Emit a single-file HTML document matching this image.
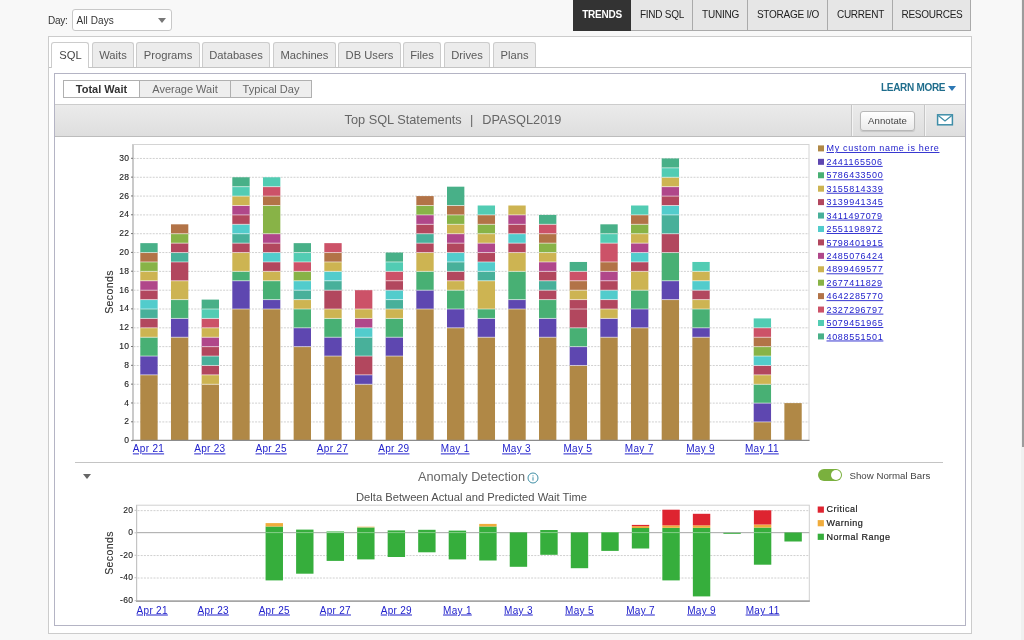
<!DOCTYPE html>
<html>
<head>
<meta charset="utf-8">
<title>Trends</title>
<style>
html,body{margin:0;padding:0;}
body{width:1024px;height:640px;overflow:hidden;background:#f8f8f8;font-family:"Liberation Sans",sans-serif;position:relative;color:#333;}
.abs{position:absolute;}
#wrap{position:absolute;left:0;top:0;width:1024px;height:640px;will-change:transform;}
#daylbl{left:48px;top:14px;font-size:10px;color:#333;line-height:13px;letter-spacing:-0.3px;}
#daysel{left:72px;top:9px;width:100px;height:22px;box-sizing:border-box;border:1px solid #c8c8c8;border-radius:3px;background:#fff;font-size:10px;line-height:21px;padding-left:3.5px;color:#333;letter-spacing:0.08px;}
#daysel i{position:absolute;right:5.2px;top:7.9px;width:0;height:0;border-left:4.5px solid transparent;border-right:4.5px solid transparent;border-top:5px solid #777;}
.nav{top:0;height:31px;box-sizing:border-box;background:#e6e6e6;border-right:1px solid #aaa;border-bottom:1px solid #aaa;font-size:10px;color:#222;text-align:center;line-height:30px;letter-spacing:-0.25px;white-space:nowrap;padding-left:1px;}
.nav.on{background:#333;color:#fff;font-weight:bold;border-color:#333;}
#outer{left:48px;top:36px;width:924px;height:598px;box-sizing:border-box;border:1px solid #ccc;background:#fff;}
#tabline{left:49px;top:67px;width:922px;height:1px;background:#c4c4c4;}
.tab{top:42px;height:25px;box-sizing:border-box;border:1px solid #ccc;border-bottom:none;border-radius:3px 3px 0 0;background:#ececec;font-size:11.2px;color:#5a5a5a;text-align:center;line-height:25px;white-space:nowrap;}
.tab.on{background:#fff;height:26px;color:#444;padding-left:1px;}
#inner{left:54px;top:73px;width:912px;height:553px;box-sizing:border-box;border:1px solid #b4b4c4;background:#fff;}
.sub{top:80px;height:18px;box-sizing:border-box;border:1px solid #b0b0b0;background:#eee;font-size:11px;color:#666;text-align:center;line-height:16px;white-space:nowrap;}
.sub.on{background:#fff;color:#333;font-weight:bold;}
#learn{left:881px;top:81.4px;font-size:10px;font-weight:bold;color:#1f6d8c;line-height:13px;white-space:nowrap;letter-spacing:-0.3px;}
#learntri{left:948.4px;top:85.8px;width:0;height:0;border-left:4.1px solid transparent;border-right:4.1px solid transparent;border-top:5px solid #2d78b4;}
#tbar{left:55px;top:104px;width:910px;height:33px;box-sizing:border-box;border-top:1px solid #ccc;border-bottom:1px solid #bcbcbc;background:linear-gradient(#ebebeb,#dedede);}
#ttl{left:55px;top:111.5px;width:796px;text-align:center;font-size:12.75px;color:#666;line-height:16px;white-space:pre;}
.vsep{top:105px;width:1px;height:31px;background:#c6c6c6;border-right:1px solid #f4f4f4;}
#ann{left:860px;top:111px;width:55px;height:20px;box-sizing:border-box;border:1px solid #b8b8b8;border-radius:3px;background:linear-gradient(#fff,#eaeaea);font-size:9.6px;color:#444;text-align:center;line-height:18.7px;letter-spacing:0.05px;box-shadow:0 1px 1px rgba(0,0,0,0.12);}
#hr2{left:75px;top:462px;width:868px;height:1px;background:#c4c4c4;}
#coll{left:82.7px;top:474.3px;width:0;height:0;border-left:4.5px solid transparent;border-right:4.5px solid transparent;border-top:5px solid #666;}
#anom{left:418px;top:469px;width:190px;font-size:12.75px;color:#666;line-height:16px;white-space:nowrap;}
#delta{left:300px;top:490px;width:343px;text-align:center;font-size:11.2px;color:#505050;line-height:14px;white-space:nowrap;}
#tog{left:818px;top:469px;width:24px;height:12px;border-radius:6px;background:#7ab03e;}
#tog i{position:absolute;right:1px;top:1px;width:10px;height:10px;border-radius:5px;background:#fff;}
#snb{left:849.5px;top:469px;font-size:9.7px;color:#444;line-height:13px;white-space:nowrap;}
#scrtrack{left:1021px;top:0;width:3px;height:640px;background:#f0f0f0;}
#scrthumb{left:1022.4px;top:0;width:1.6px;height:447px;background:#9c9c9c;}
svg text{font-family:"Liberation Sans",sans-serif;}
.yt{font-size:8.5px;fill:#222;letter-spacing:0.4px;stroke:#222;stroke-width:0.12px;}
.xl{font-size:10px;fill:#2222cc;letter-spacing:0.3px;text-decoration:underline;}
.al{font-size:10.5px;fill:#333;letter-spacing:0.4px;stroke:#333;stroke-width:0.12px;}
.lg{font-size:9px;fill:#2222cc;text-decoration:underline;letter-spacing:0.68px;}
.lg2{font-size:9px;fill:#222;letter-spacing:0.5px;stroke:#222;stroke-width:0.2px;}
</style>
</head>
<body>
<div id="wrap">
<div class="abs" id="daylbl">Day:</div>
<div class="abs" id="daysel">All Days<i></i></div>

<div class="abs nav on" style="left:573px;width:58px;">TRENDS</div>
<div class="abs nav" style="left:631px;width:62px;">FIND SQL</div>
<div class="abs nav" style="left:693px;width:55px;">TUNING</div>
<div class="abs nav" style="left:748px;width:80px;">STORAGE I/O</div>
<div class="abs nav" style="left:828px;width:65px;">CURRENT</div>
<div class="abs nav" style="left:893px;width:78px;">RESOURCES</div>

<div class="abs" id="outer"></div>
<div class="abs" id="tabline"></div>
<div class="abs tab on" style="left:51px;width:38px;">SQL</div>
<div class="abs tab" style="left:92px;width:42px;">Waits</div>
<div class="abs tab" style="left:136px;width:64px;">Programs</div>
<div class="abs tab" style="left:202px;width:68px;">Databases</div>
<div class="abs tab" style="left:273px;width:63px;">Machines</div>
<div class="abs tab" style="left:338px;width:63px;">DB Users</div>
<div class="abs tab" style="left:403px;width:38px;">Files</div>
<div class="abs tab" style="left:444px;width:46px;">Drives</div>
<div class="abs tab" style="left:493px;width:43px;">Plans</div>

<div class="abs" id="inner"></div>
<div class="abs sub on" style="left:63px;width:77px;">Total Wait</div>
<div class="abs sub" style="left:139px;width:92px;">Average Wait</div>
<div class="abs sub" style="left:230px;width:82px;">Typical Day</div>
<div class="abs" id="learn">LEARN MORE</div>
<div class="abs" id="learntri"></div>

<div class="abs" id="tbar"></div>
<div class="abs" id="ttl">Top SQL Statements<span style="margin:0 8.9px 0 8.4px">|</span>DPASQL2019</div>
<div class="abs vsep" style="left:851px;"></div>
<div class="abs vsep" style="left:924px;"></div>
<div class="abs" id="ann">Annotate</div>
<svg class="abs" style="left:936px;top:113px;" width="18" height="14" viewBox="0 0 18 14"><rect x="1.6" y="1.8" width="14.8" height="10" fill="#fff" stroke="#3f8ea8" stroke-width="1.5"/><path d="M2.2 2.6 L9 8 L15.8 2.6" fill="none" stroke="#3f8ea8" stroke-width="1.3"/></svg>

<div class="abs" id="hr2"></div>
<div class="abs" id="coll"></div>
<div class="abs" id="anom">Anomaly Detection</div>
<svg class="abs" style="left:527.2px;top:471.5px;" width="12" height="12" viewBox="0 0 12 12"><circle cx="6" cy="6" r="5" fill="#fff" stroke="#3f8fa6" stroke-width="1"/><rect x="5.5" y="5.2" width="1" height="3.4" fill="#3f8fa6"/><rect x="5.5" y="3.3" width="1" height="1.1" fill="#3f8fa6"/></svg>
<div class="abs" id="delta">Delta Between Actual and Predicted Wait Time</div>
<div class="abs" id="tog"><i></i></div>
<div class="abs" id="snb">Show Normal Bars</div>

<svg class="abs" style="left:0;top:0;" width="1024" height="640" viewBox="0 0 1024 640">
<rect x="132.5" y="144.5" width="676.5" height="295.8" fill="#fff" stroke="#d4d4d4" stroke-width="1"/>
<line x1="133.5" y1="421.93" x2="809.0" y2="421.93" stroke="#d0d0d0" stroke-width="1" stroke-dasharray="2,1.2"/>
<line x1="133.5" y1="403.11" x2="809.0" y2="403.11" stroke="#d0d0d0" stroke-width="1" stroke-dasharray="2,1.2"/>
<line x1="133.5" y1="384.29" x2="809.0" y2="384.29" stroke="#d0d0d0" stroke-width="1" stroke-dasharray="2,1.2"/>
<line x1="133.5" y1="365.47" x2="809.0" y2="365.47" stroke="#d0d0d0" stroke-width="1" stroke-dasharray="2,1.2"/>
<line x1="133.5" y1="346.65" x2="809.0" y2="346.65" stroke="#d0d0d0" stroke-width="1" stroke-dasharray="2,1.2"/>
<line x1="133.5" y1="327.83" x2="809.0" y2="327.83" stroke="#d0d0d0" stroke-width="1" stroke-dasharray="2,1.2"/>
<line x1="133.5" y1="309.01" x2="809.0" y2="309.01" stroke="#d0d0d0" stroke-width="1" stroke-dasharray="2,1.2"/>
<line x1="133.5" y1="290.19" x2="809.0" y2="290.19" stroke="#d0d0d0" stroke-width="1" stroke-dasharray="2,1.2"/>
<line x1="133.5" y1="271.37" x2="809.0" y2="271.37" stroke="#d0d0d0" stroke-width="1" stroke-dasharray="2,1.2"/>
<line x1="133.5" y1="252.55" x2="809.0" y2="252.55" stroke="#d0d0d0" stroke-width="1" stroke-dasharray="2,1.2"/>
<line x1="133.5" y1="233.73" x2="809.0" y2="233.73" stroke="#d0d0d0" stroke-width="1" stroke-dasharray="2,1.2"/>
<line x1="133.5" y1="214.91" x2="809.0" y2="214.91" stroke="#d0d0d0" stroke-width="1" stroke-dasharray="2,1.2"/>
<line x1="133.5" y1="196.09" x2="809.0" y2="196.09" stroke="#d0d0d0" stroke-width="1" stroke-dasharray="2,1.2"/>
<line x1="133.5" y1="177.27" x2="809.0" y2="177.27" stroke="#d0d0d0" stroke-width="1" stroke-dasharray="2,1.2"/>
<line x1="133.5" y1="158.45" x2="809.0" y2="158.45" stroke="#d0d0d0" stroke-width="1" stroke-dasharray="2,1.2"/>
<rect x="140.30" y="374.88" width="17.35" height="65.87" fill="#B08846"/>
<rect x="140.30" y="356.06" width="17.35" height="18.82" fill="#5E47B0"/>
<rect x="140.30" y="337.24" width="17.35" height="18.82" fill="#48B074"/>
<rect x="140.30" y="327.83" width="17.35" height="9.41" fill="#CDB452"/>
<rect x="140.30" y="318.42" width="17.35" height="9.41" fill="#B2475E"/>
<rect x="140.30" y="309.01" width="17.35" height="9.41" fill="#48B09A"/>
<rect x="140.30" y="299.60" width="17.35" height="9.41" fill="#52CCCC"/>
<rect x="140.30" y="290.19" width="17.35" height="9.41" fill="#B2475E"/>
<rect x="140.30" y="280.78" width="17.35" height="9.41" fill="#B0478A"/>
<rect x="140.30" y="271.37" width="17.35" height="9.41" fill="#CDB452"/>
<rect x="140.30" y="261.96" width="17.35" height="9.41" fill="#88B347"/>
<rect x="140.30" y="252.55" width="17.35" height="9.41" fill="#B27347"/>
<rect x="140.30" y="243.14" width="17.35" height="9.41" fill="#48B088"/>
<rect x="140.30" y="374.38" width="17.35" height="1" fill="#fff" fill-opacity="0.55"/>
<rect x="140.30" y="355.56" width="17.35" height="1" fill="#fff" fill-opacity="0.55"/>
<rect x="140.30" y="336.74" width="17.35" height="1" fill="#fff" fill-opacity="0.55"/>
<rect x="140.30" y="327.33" width="17.35" height="1" fill="#fff" fill-opacity="0.55"/>
<rect x="140.30" y="317.92" width="17.35" height="1" fill="#fff" fill-opacity="0.55"/>
<rect x="140.30" y="308.51" width="17.35" height="1" fill="#fff" fill-opacity="0.55"/>
<rect x="140.30" y="299.10" width="17.35" height="1" fill="#fff" fill-opacity="0.55"/>
<rect x="140.30" y="289.69" width="17.35" height="1" fill="#fff" fill-opacity="0.55"/>
<rect x="140.30" y="280.28" width="17.35" height="1" fill="#fff" fill-opacity="0.55"/>
<rect x="140.30" y="270.87" width="17.35" height="1" fill="#fff" fill-opacity="0.55"/>
<rect x="140.30" y="261.46" width="17.35" height="1" fill="#fff" fill-opacity="0.55"/>
<rect x="140.30" y="252.05" width="17.35" height="1" fill="#fff" fill-opacity="0.55"/>
<rect x="170.97" y="337.24" width="17.35" height="103.51" fill="#B08846"/>
<rect x="170.97" y="318.42" width="17.35" height="18.82" fill="#5E47B0"/>
<rect x="170.97" y="299.60" width="17.35" height="18.82" fill="#48B074"/>
<rect x="170.97" y="280.78" width="17.35" height="18.82" fill="#CDB452"/>
<rect x="170.97" y="261.96" width="17.35" height="18.82" fill="#B2475E"/>
<rect x="170.97" y="252.55" width="17.35" height="9.41" fill="#48B09A"/>
<rect x="170.97" y="243.14" width="17.35" height="9.41" fill="#B2475E"/>
<rect x="170.97" y="233.73" width="17.35" height="9.41" fill="#88B347"/>
<rect x="170.97" y="224.32" width="17.35" height="9.41" fill="#B27347"/>
<rect x="170.97" y="336.74" width="17.35" height="1" fill="#fff" fill-opacity="0.55"/>
<rect x="170.97" y="317.92" width="17.35" height="1" fill="#fff" fill-opacity="0.55"/>
<rect x="170.97" y="299.10" width="17.35" height="1" fill="#fff" fill-opacity="0.55"/>
<rect x="170.97" y="280.28" width="17.35" height="1" fill="#fff" fill-opacity="0.55"/>
<rect x="170.97" y="261.46" width="17.35" height="1" fill="#fff" fill-opacity="0.55"/>
<rect x="170.97" y="252.05" width="17.35" height="1" fill="#fff" fill-opacity="0.55"/>
<rect x="170.97" y="242.64" width="17.35" height="1" fill="#fff" fill-opacity="0.55"/>
<rect x="170.97" y="233.23" width="17.35" height="1" fill="#fff" fill-opacity="0.55"/>
<rect x="201.64" y="384.29" width="17.35" height="56.46" fill="#B08846"/>
<rect x="201.64" y="374.88" width="17.35" height="9.41" fill="#CDB452"/>
<rect x="201.64" y="365.47" width="17.35" height="9.41" fill="#B2475E"/>
<rect x="201.64" y="356.06" width="17.35" height="9.41" fill="#48B09A"/>
<rect x="201.64" y="346.65" width="17.35" height="9.41" fill="#B2475E"/>
<rect x="201.64" y="337.24" width="17.35" height="9.41" fill="#B0478A"/>
<rect x="201.64" y="327.83" width="17.35" height="9.41" fill="#CDB452"/>
<rect x="201.64" y="318.42" width="17.35" height="9.41" fill="#CC5268"/>
<rect x="201.64" y="309.01" width="17.35" height="9.41" fill="#52CCB3"/>
<rect x="201.64" y="299.60" width="17.35" height="9.41" fill="#48B088"/>
<rect x="201.64" y="383.79" width="17.35" height="1" fill="#fff" fill-opacity="0.55"/>
<rect x="201.64" y="374.38" width="17.35" height="1" fill="#fff" fill-opacity="0.55"/>
<rect x="201.64" y="364.97" width="17.35" height="1" fill="#fff" fill-opacity="0.55"/>
<rect x="201.64" y="355.56" width="17.35" height="1" fill="#fff" fill-opacity="0.55"/>
<rect x="201.64" y="346.15" width="17.35" height="1" fill="#fff" fill-opacity="0.55"/>
<rect x="201.64" y="336.74" width="17.35" height="1" fill="#fff" fill-opacity="0.55"/>
<rect x="201.64" y="327.33" width="17.35" height="1" fill="#fff" fill-opacity="0.55"/>
<rect x="201.64" y="317.92" width="17.35" height="1" fill="#fff" fill-opacity="0.55"/>
<rect x="201.64" y="308.51" width="17.35" height="1" fill="#fff" fill-opacity="0.55"/>
<rect x="232.31" y="309.01" width="17.35" height="131.74" fill="#B08846"/>
<rect x="232.31" y="280.78" width="17.35" height="28.23" fill="#5E47B0"/>
<rect x="232.31" y="271.37" width="17.35" height="9.41" fill="#48B074"/>
<rect x="232.31" y="252.55" width="17.35" height="18.82" fill="#CDB452"/>
<rect x="232.31" y="243.14" width="17.35" height="9.41" fill="#B2475E"/>
<rect x="232.31" y="233.73" width="17.35" height="9.41" fill="#48B09A"/>
<rect x="232.31" y="224.32" width="17.35" height="9.41" fill="#52CCCC"/>
<rect x="232.31" y="214.91" width="17.35" height="9.41" fill="#B2475E"/>
<rect x="232.31" y="205.50" width="17.35" height="9.41" fill="#B0478A"/>
<rect x="232.31" y="196.09" width="17.35" height="9.41" fill="#CDB452"/>
<rect x="232.31" y="186.68" width="17.35" height="9.41" fill="#52CCB3"/>
<rect x="232.31" y="177.27" width="17.35" height="9.41" fill="#48B088"/>
<rect x="232.31" y="308.51" width="17.35" height="1" fill="#fff" fill-opacity="0.55"/>
<rect x="232.31" y="280.28" width="17.35" height="1" fill="#fff" fill-opacity="0.55"/>
<rect x="232.31" y="270.87" width="17.35" height="1" fill="#fff" fill-opacity="0.55"/>
<rect x="232.31" y="252.05" width="17.35" height="1" fill="#fff" fill-opacity="0.55"/>
<rect x="232.31" y="242.64" width="17.35" height="1" fill="#fff" fill-opacity="0.55"/>
<rect x="232.31" y="233.23" width="17.35" height="1" fill="#fff" fill-opacity="0.55"/>
<rect x="232.31" y="223.82" width="17.35" height="1" fill="#fff" fill-opacity="0.55"/>
<rect x="232.31" y="214.41" width="17.35" height="1" fill="#fff" fill-opacity="0.55"/>
<rect x="232.31" y="205.00" width="17.35" height="1" fill="#fff" fill-opacity="0.55"/>
<rect x="232.31" y="195.59" width="17.35" height="1" fill="#fff" fill-opacity="0.55"/>
<rect x="232.31" y="186.18" width="17.35" height="1" fill="#fff" fill-opacity="0.55"/>
<rect x="262.98" y="309.01" width="17.35" height="131.74" fill="#B08846"/>
<rect x="262.98" y="299.60" width="17.35" height="9.41" fill="#5E47B0"/>
<rect x="262.98" y="280.78" width="17.35" height="18.82" fill="#48B074"/>
<rect x="262.98" y="271.37" width="17.35" height="9.41" fill="#CDB452"/>
<rect x="262.98" y="261.96" width="17.35" height="9.41" fill="#B2475E"/>
<rect x="262.98" y="252.55" width="17.35" height="9.41" fill="#52CCCC"/>
<rect x="262.98" y="243.14" width="17.35" height="9.41" fill="#B2475E"/>
<rect x="262.98" y="233.73" width="17.35" height="9.41" fill="#B0478A"/>
<rect x="262.98" y="205.50" width="17.35" height="28.23" fill="#88B347"/>
<rect x="262.98" y="196.09" width="17.35" height="9.41" fill="#B27347"/>
<rect x="262.98" y="186.68" width="17.35" height="9.41" fill="#CC5268"/>
<rect x="262.98" y="177.27" width="17.35" height="9.41" fill="#52CCB3"/>
<rect x="262.98" y="308.51" width="17.35" height="1" fill="#fff" fill-opacity="0.55"/>
<rect x="262.98" y="299.10" width="17.35" height="1" fill="#fff" fill-opacity="0.55"/>
<rect x="262.98" y="280.28" width="17.35" height="1" fill="#fff" fill-opacity="0.55"/>
<rect x="262.98" y="270.87" width="17.35" height="1" fill="#fff" fill-opacity="0.55"/>
<rect x="262.98" y="261.46" width="17.35" height="1" fill="#fff" fill-opacity="0.55"/>
<rect x="262.98" y="252.05" width="17.35" height="1" fill="#fff" fill-opacity="0.55"/>
<rect x="262.98" y="242.64" width="17.35" height="1" fill="#fff" fill-opacity="0.55"/>
<rect x="262.98" y="233.23" width="17.35" height="1" fill="#fff" fill-opacity="0.55"/>
<rect x="262.98" y="205.00" width="17.35" height="1" fill="#fff" fill-opacity="0.55"/>
<rect x="262.98" y="195.59" width="17.35" height="1" fill="#fff" fill-opacity="0.55"/>
<rect x="262.98" y="186.18" width="17.35" height="1" fill="#fff" fill-opacity="0.55"/>
<rect x="293.65" y="346.65" width="17.35" height="94.10" fill="#B08846"/>
<rect x="293.65" y="327.83" width="17.35" height="18.82" fill="#5E47B0"/>
<rect x="293.65" y="309.01" width="17.35" height="18.82" fill="#48B074"/>
<rect x="293.65" y="299.60" width="17.35" height="9.41" fill="#CDB452"/>
<rect x="293.65" y="290.19" width="17.35" height="9.41" fill="#48B09A"/>
<rect x="293.65" y="280.78" width="17.35" height="9.41" fill="#52CCCC"/>
<rect x="293.65" y="271.37" width="17.35" height="9.41" fill="#88B347"/>
<rect x="293.65" y="261.96" width="17.35" height="9.41" fill="#CC5268"/>
<rect x="293.65" y="252.55" width="17.35" height="9.41" fill="#52CCB3"/>
<rect x="293.65" y="243.14" width="17.35" height="9.41" fill="#48B088"/>
<rect x="293.65" y="346.15" width="17.35" height="1" fill="#fff" fill-opacity="0.55"/>
<rect x="293.65" y="327.33" width="17.35" height="1" fill="#fff" fill-opacity="0.55"/>
<rect x="293.65" y="308.51" width="17.35" height="1" fill="#fff" fill-opacity="0.55"/>
<rect x="293.65" y="299.10" width="17.35" height="1" fill="#fff" fill-opacity="0.55"/>
<rect x="293.65" y="289.69" width="17.35" height="1" fill="#fff" fill-opacity="0.55"/>
<rect x="293.65" y="280.28" width="17.35" height="1" fill="#fff" fill-opacity="0.55"/>
<rect x="293.65" y="270.87" width="17.35" height="1" fill="#fff" fill-opacity="0.55"/>
<rect x="293.65" y="261.46" width="17.35" height="1" fill="#fff" fill-opacity="0.55"/>
<rect x="293.65" y="252.05" width="17.35" height="1" fill="#fff" fill-opacity="0.55"/>
<rect x="324.32" y="356.06" width="17.35" height="84.69" fill="#B08846"/>
<rect x="324.32" y="337.24" width="17.35" height="18.82" fill="#5E47B0"/>
<rect x="324.32" y="318.42" width="17.35" height="18.82" fill="#48B074"/>
<rect x="324.32" y="309.01" width="17.35" height="9.41" fill="#CDB452"/>
<rect x="324.32" y="290.19" width="17.35" height="18.82" fill="#B2475E"/>
<rect x="324.32" y="280.78" width="17.35" height="9.41" fill="#48B09A"/>
<rect x="324.32" y="271.37" width="17.35" height="9.41" fill="#52CCCC"/>
<rect x="324.32" y="261.96" width="17.35" height="9.41" fill="#CDB452"/>
<rect x="324.32" y="252.55" width="17.35" height="9.41" fill="#B27347"/>
<rect x="324.32" y="243.14" width="17.35" height="9.41" fill="#CC5268"/>
<rect x="324.32" y="355.56" width="17.35" height="1" fill="#fff" fill-opacity="0.55"/>
<rect x="324.32" y="336.74" width="17.35" height="1" fill="#fff" fill-opacity="0.55"/>
<rect x="324.32" y="317.92" width="17.35" height="1" fill="#fff" fill-opacity="0.55"/>
<rect x="324.32" y="308.51" width="17.35" height="1" fill="#fff" fill-opacity="0.55"/>
<rect x="324.32" y="289.69" width="17.35" height="1" fill="#fff" fill-opacity="0.55"/>
<rect x="324.32" y="280.28" width="17.35" height="1" fill="#fff" fill-opacity="0.55"/>
<rect x="324.32" y="270.87" width="17.35" height="1" fill="#fff" fill-opacity="0.55"/>
<rect x="324.32" y="261.46" width="17.35" height="1" fill="#fff" fill-opacity="0.55"/>
<rect x="324.32" y="252.05" width="17.35" height="1" fill="#fff" fill-opacity="0.55"/>
<rect x="354.99" y="384.29" width="17.35" height="56.46" fill="#B08846"/>
<rect x="354.99" y="374.88" width="17.35" height="9.41" fill="#5E47B0"/>
<rect x="354.99" y="356.06" width="17.35" height="18.82" fill="#B2475E"/>
<rect x="354.99" y="337.24" width="17.35" height="18.82" fill="#48B09A"/>
<rect x="354.99" y="327.83" width="17.35" height="9.41" fill="#52CCCC"/>
<rect x="354.99" y="318.42" width="17.35" height="9.41" fill="#B0478A"/>
<rect x="354.99" y="309.01" width="17.35" height="9.41" fill="#CDB452"/>
<rect x="354.99" y="290.19" width="17.35" height="18.82" fill="#CC5268"/>
<rect x="354.99" y="383.79" width="17.35" height="1" fill="#fff" fill-opacity="0.55"/>
<rect x="354.99" y="374.38" width="17.35" height="1" fill="#fff" fill-opacity="0.55"/>
<rect x="354.99" y="355.56" width="17.35" height="1" fill="#fff" fill-opacity="0.55"/>
<rect x="354.99" y="336.74" width="17.35" height="1" fill="#fff" fill-opacity="0.55"/>
<rect x="354.99" y="327.33" width="17.35" height="1" fill="#fff" fill-opacity="0.55"/>
<rect x="354.99" y="317.92" width="17.35" height="1" fill="#fff" fill-opacity="0.55"/>
<rect x="354.99" y="308.51" width="17.35" height="1" fill="#fff" fill-opacity="0.55"/>
<rect x="385.66" y="356.06" width="17.35" height="84.69" fill="#B08846"/>
<rect x="385.66" y="337.24" width="17.35" height="18.82" fill="#5E47B0"/>
<rect x="385.66" y="318.42" width="17.35" height="18.82" fill="#48B074"/>
<rect x="385.66" y="309.01" width="17.35" height="9.41" fill="#CDB452"/>
<rect x="385.66" y="299.60" width="17.35" height="9.41" fill="#48B09A"/>
<rect x="385.66" y="290.19" width="17.35" height="9.41" fill="#52CCCC"/>
<rect x="385.66" y="280.78" width="17.35" height="9.41" fill="#B2475E"/>
<rect x="385.66" y="271.37" width="17.35" height="9.41" fill="#CC5268"/>
<rect x="385.66" y="261.96" width="17.35" height="9.41" fill="#52CCB3"/>
<rect x="385.66" y="252.55" width="17.35" height="9.41" fill="#48B088"/>
<rect x="385.66" y="355.56" width="17.35" height="1" fill="#fff" fill-opacity="0.55"/>
<rect x="385.66" y="336.74" width="17.35" height="1" fill="#fff" fill-opacity="0.55"/>
<rect x="385.66" y="317.92" width="17.35" height="1" fill="#fff" fill-opacity="0.55"/>
<rect x="385.66" y="308.51" width="17.35" height="1" fill="#fff" fill-opacity="0.55"/>
<rect x="385.66" y="299.10" width="17.35" height="1" fill="#fff" fill-opacity="0.55"/>
<rect x="385.66" y="289.69" width="17.35" height="1" fill="#fff" fill-opacity="0.55"/>
<rect x="385.66" y="280.28" width="17.35" height="1" fill="#fff" fill-opacity="0.55"/>
<rect x="385.66" y="270.87" width="17.35" height="1" fill="#fff" fill-opacity="0.55"/>
<rect x="385.66" y="261.46" width="17.35" height="1" fill="#fff" fill-opacity="0.55"/>
<rect x="416.33" y="309.01" width="17.35" height="131.74" fill="#B08846"/>
<rect x="416.33" y="290.19" width="17.35" height="18.82" fill="#5E47B0"/>
<rect x="416.33" y="271.37" width="17.35" height="18.82" fill="#48B074"/>
<rect x="416.33" y="252.55" width="17.35" height="18.82" fill="#CDB452"/>
<rect x="416.33" y="243.14" width="17.35" height="9.41" fill="#B2475E"/>
<rect x="416.33" y="233.73" width="17.35" height="9.41" fill="#48B09A"/>
<rect x="416.33" y="224.32" width="17.35" height="9.41" fill="#B2475E"/>
<rect x="416.33" y="214.91" width="17.35" height="9.41" fill="#B0478A"/>
<rect x="416.33" y="205.50" width="17.35" height="9.41" fill="#88B347"/>
<rect x="416.33" y="196.09" width="17.35" height="9.41" fill="#B27347"/>
<rect x="416.33" y="308.51" width="17.35" height="1" fill="#fff" fill-opacity="0.55"/>
<rect x="416.33" y="289.69" width="17.35" height="1" fill="#fff" fill-opacity="0.55"/>
<rect x="416.33" y="270.87" width="17.35" height="1" fill="#fff" fill-opacity="0.55"/>
<rect x="416.33" y="252.05" width="17.35" height="1" fill="#fff" fill-opacity="0.55"/>
<rect x="416.33" y="242.64" width="17.35" height="1" fill="#fff" fill-opacity="0.55"/>
<rect x="416.33" y="233.23" width="17.35" height="1" fill="#fff" fill-opacity="0.55"/>
<rect x="416.33" y="223.82" width="17.35" height="1" fill="#fff" fill-opacity="0.55"/>
<rect x="416.33" y="214.41" width="17.35" height="1" fill="#fff" fill-opacity="0.55"/>
<rect x="416.33" y="205.00" width="17.35" height="1" fill="#fff" fill-opacity="0.55"/>
<rect x="447.00" y="327.83" width="17.35" height="112.92" fill="#B08846"/>
<rect x="447.00" y="309.01" width="17.35" height="18.82" fill="#5E47B0"/>
<rect x="447.00" y="290.19" width="17.35" height="18.82" fill="#48B074"/>
<rect x="447.00" y="280.78" width="17.35" height="9.41" fill="#CDB452"/>
<rect x="447.00" y="271.37" width="17.35" height="9.41" fill="#B2475E"/>
<rect x="447.00" y="261.96" width="17.35" height="9.41" fill="#48B09A"/>
<rect x="447.00" y="252.55" width="17.35" height="9.41" fill="#52CCCC"/>
<rect x="447.00" y="243.14" width="17.35" height="9.41" fill="#B2475E"/>
<rect x="447.00" y="233.73" width="17.35" height="9.41" fill="#B0478A"/>
<rect x="447.00" y="224.32" width="17.35" height="9.41" fill="#CDB452"/>
<rect x="447.00" y="214.91" width="17.35" height="9.41" fill="#88B347"/>
<rect x="447.00" y="205.50" width="17.35" height="9.41" fill="#B27347"/>
<rect x="447.00" y="186.68" width="17.35" height="18.82" fill="#48B088"/>
<rect x="447.00" y="327.33" width="17.35" height="1" fill="#fff" fill-opacity="0.55"/>
<rect x="447.00" y="308.51" width="17.35" height="1" fill="#fff" fill-opacity="0.55"/>
<rect x="447.00" y="289.69" width="17.35" height="1" fill="#fff" fill-opacity="0.55"/>
<rect x="447.00" y="280.28" width="17.35" height="1" fill="#fff" fill-opacity="0.55"/>
<rect x="447.00" y="270.87" width="17.35" height="1" fill="#fff" fill-opacity="0.55"/>
<rect x="447.00" y="261.46" width="17.35" height="1" fill="#fff" fill-opacity="0.55"/>
<rect x="447.00" y="252.05" width="17.35" height="1" fill="#fff" fill-opacity="0.55"/>
<rect x="447.00" y="242.64" width="17.35" height="1" fill="#fff" fill-opacity="0.55"/>
<rect x="447.00" y="233.23" width="17.35" height="1" fill="#fff" fill-opacity="0.55"/>
<rect x="447.00" y="223.82" width="17.35" height="1" fill="#fff" fill-opacity="0.55"/>
<rect x="447.00" y="214.41" width="17.35" height="1" fill="#fff" fill-opacity="0.55"/>
<rect x="447.00" y="205.00" width="17.35" height="1" fill="#fff" fill-opacity="0.55"/>
<rect x="477.67" y="337.24" width="17.35" height="103.51" fill="#B08846"/>
<rect x="477.67" y="318.42" width="17.35" height="18.82" fill="#5E47B0"/>
<rect x="477.67" y="309.01" width="17.35" height="9.41" fill="#48B074"/>
<rect x="477.67" y="280.78" width="17.35" height="28.23" fill="#CDB452"/>
<rect x="477.67" y="271.37" width="17.35" height="9.41" fill="#48B09A"/>
<rect x="477.67" y="261.96" width="17.35" height="9.41" fill="#52CCCC"/>
<rect x="477.67" y="252.55" width="17.35" height="9.41" fill="#B2475E"/>
<rect x="477.67" y="243.14" width="17.35" height="9.41" fill="#B0478A"/>
<rect x="477.67" y="233.73" width="17.35" height="9.41" fill="#CDB452"/>
<rect x="477.67" y="224.32" width="17.35" height="9.41" fill="#88B347"/>
<rect x="477.67" y="214.91" width="17.35" height="9.41" fill="#B27347"/>
<rect x="477.67" y="205.50" width="17.35" height="9.41" fill="#52CCB3"/>
<rect x="477.67" y="336.74" width="17.35" height="1" fill="#fff" fill-opacity="0.55"/>
<rect x="477.67" y="317.92" width="17.35" height="1" fill="#fff" fill-opacity="0.55"/>
<rect x="477.67" y="308.51" width="17.35" height="1" fill="#fff" fill-opacity="0.55"/>
<rect x="477.67" y="280.28" width="17.35" height="1" fill="#fff" fill-opacity="0.55"/>
<rect x="477.67" y="270.87" width="17.35" height="1" fill="#fff" fill-opacity="0.55"/>
<rect x="477.67" y="261.46" width="17.35" height="1" fill="#fff" fill-opacity="0.55"/>
<rect x="477.67" y="252.05" width="17.35" height="1" fill="#fff" fill-opacity="0.55"/>
<rect x="477.67" y="242.64" width="17.35" height="1" fill="#fff" fill-opacity="0.55"/>
<rect x="477.67" y="233.23" width="17.35" height="1" fill="#fff" fill-opacity="0.55"/>
<rect x="477.67" y="223.82" width="17.35" height="1" fill="#fff" fill-opacity="0.55"/>
<rect x="477.67" y="214.41" width="17.35" height="1" fill="#fff" fill-opacity="0.55"/>
<rect x="508.34" y="309.01" width="17.35" height="131.74" fill="#B08846"/>
<rect x="508.34" y="299.60" width="17.35" height="9.41" fill="#5E47B0"/>
<rect x="508.34" y="271.37" width="17.35" height="28.23" fill="#48B074"/>
<rect x="508.34" y="252.55" width="17.35" height="18.82" fill="#CDB452"/>
<rect x="508.34" y="243.14" width="17.35" height="9.41" fill="#B2475E"/>
<rect x="508.34" y="233.73" width="17.35" height="9.41" fill="#52CCCC"/>
<rect x="508.34" y="224.32" width="17.35" height="9.41" fill="#B2475E"/>
<rect x="508.34" y="214.91" width="17.35" height="9.41" fill="#B0478A"/>
<rect x="508.34" y="205.50" width="17.35" height="9.41" fill="#CDB452"/>
<rect x="508.34" y="308.51" width="17.35" height="1" fill="#fff" fill-opacity="0.55"/>
<rect x="508.34" y="299.10" width="17.35" height="1" fill="#fff" fill-opacity="0.55"/>
<rect x="508.34" y="270.87" width="17.35" height="1" fill="#fff" fill-opacity="0.55"/>
<rect x="508.34" y="252.05" width="17.35" height="1" fill="#fff" fill-opacity="0.55"/>
<rect x="508.34" y="242.64" width="17.35" height="1" fill="#fff" fill-opacity="0.55"/>
<rect x="508.34" y="233.23" width="17.35" height="1" fill="#fff" fill-opacity="0.55"/>
<rect x="508.34" y="223.82" width="17.35" height="1" fill="#fff" fill-opacity="0.55"/>
<rect x="508.34" y="214.41" width="17.35" height="1" fill="#fff" fill-opacity="0.55"/>
<rect x="539.01" y="337.24" width="17.35" height="103.51" fill="#B08846"/>
<rect x="539.01" y="318.42" width="17.35" height="18.82" fill="#5E47B0"/>
<rect x="539.01" y="299.60" width="17.35" height="18.82" fill="#48B074"/>
<rect x="539.01" y="290.19" width="17.35" height="9.41" fill="#B2475E"/>
<rect x="539.01" y="280.78" width="17.35" height="9.41" fill="#48B09A"/>
<rect x="539.01" y="271.37" width="17.35" height="9.41" fill="#B2475E"/>
<rect x="539.01" y="261.96" width="17.35" height="9.41" fill="#B0478A"/>
<rect x="539.01" y="252.55" width="17.35" height="9.41" fill="#CDB452"/>
<rect x="539.01" y="243.14" width="17.35" height="9.41" fill="#88B347"/>
<rect x="539.01" y="233.73" width="17.35" height="9.41" fill="#B27347"/>
<rect x="539.01" y="224.32" width="17.35" height="9.41" fill="#CC5268"/>
<rect x="539.01" y="214.91" width="17.35" height="9.41" fill="#48B088"/>
<rect x="539.01" y="336.74" width="17.35" height="1" fill="#fff" fill-opacity="0.55"/>
<rect x="539.01" y="317.92" width="17.35" height="1" fill="#fff" fill-opacity="0.55"/>
<rect x="539.01" y="299.10" width="17.35" height="1" fill="#fff" fill-opacity="0.55"/>
<rect x="539.01" y="289.69" width="17.35" height="1" fill="#fff" fill-opacity="0.55"/>
<rect x="539.01" y="280.28" width="17.35" height="1" fill="#fff" fill-opacity="0.55"/>
<rect x="539.01" y="270.87" width="17.35" height="1" fill="#fff" fill-opacity="0.55"/>
<rect x="539.01" y="261.46" width="17.35" height="1" fill="#fff" fill-opacity="0.55"/>
<rect x="539.01" y="252.05" width="17.35" height="1" fill="#fff" fill-opacity="0.55"/>
<rect x="539.01" y="242.64" width="17.35" height="1" fill="#fff" fill-opacity="0.55"/>
<rect x="539.01" y="233.23" width="17.35" height="1" fill="#fff" fill-opacity="0.55"/>
<rect x="539.01" y="223.82" width="17.35" height="1" fill="#fff" fill-opacity="0.55"/>
<rect x="569.68" y="365.47" width="17.35" height="75.28" fill="#B08846"/>
<rect x="569.68" y="346.65" width="17.35" height="18.82" fill="#5E47B0"/>
<rect x="569.68" y="327.83" width="17.35" height="18.82" fill="#48B074"/>
<rect x="569.68" y="309.01" width="17.35" height="18.82" fill="#B2475E"/>
<rect x="569.68" y="299.60" width="17.35" height="9.41" fill="#B2475E"/>
<rect x="569.68" y="290.19" width="17.35" height="9.41" fill="#CDB452"/>
<rect x="569.68" y="280.78" width="17.35" height="9.41" fill="#B27347"/>
<rect x="569.68" y="271.37" width="17.35" height="9.41" fill="#CC5268"/>
<rect x="569.68" y="261.96" width="17.35" height="9.41" fill="#48B088"/>
<rect x="569.68" y="364.97" width="17.35" height="1" fill="#fff" fill-opacity="0.55"/>
<rect x="569.68" y="346.15" width="17.35" height="1" fill="#fff" fill-opacity="0.55"/>
<rect x="569.68" y="327.33" width="17.35" height="1" fill="#fff" fill-opacity="0.55"/>
<rect x="569.68" y="308.51" width="17.35" height="1" fill="#fff" fill-opacity="0.55"/>
<rect x="569.68" y="299.10" width="17.35" height="1" fill="#fff" fill-opacity="0.55"/>
<rect x="569.68" y="289.69" width="17.35" height="1" fill="#fff" fill-opacity="0.55"/>
<rect x="569.68" y="280.28" width="17.35" height="1" fill="#fff" fill-opacity="0.55"/>
<rect x="569.68" y="270.87" width="17.35" height="1" fill="#fff" fill-opacity="0.55"/>
<rect x="600.35" y="337.24" width="17.35" height="103.51" fill="#B08846"/>
<rect x="600.35" y="318.42" width="17.35" height="18.82" fill="#5E47B0"/>
<rect x="600.35" y="309.01" width="17.35" height="9.41" fill="#CDB452"/>
<rect x="600.35" y="299.60" width="17.35" height="9.41" fill="#B2475E"/>
<rect x="600.35" y="290.19" width="17.35" height="9.41" fill="#52CCCC"/>
<rect x="600.35" y="280.78" width="17.35" height="9.41" fill="#B2475E"/>
<rect x="600.35" y="271.37" width="17.35" height="9.41" fill="#B0478A"/>
<rect x="600.35" y="261.96" width="17.35" height="9.41" fill="#B27347"/>
<rect x="600.35" y="243.14" width="17.35" height="18.82" fill="#CC5268"/>
<rect x="600.35" y="233.73" width="17.35" height="9.41" fill="#52CCB3"/>
<rect x="600.35" y="224.32" width="17.35" height="9.41" fill="#48B088"/>
<rect x="600.35" y="336.74" width="17.35" height="1" fill="#fff" fill-opacity="0.55"/>
<rect x="600.35" y="317.92" width="17.35" height="1" fill="#fff" fill-opacity="0.55"/>
<rect x="600.35" y="308.51" width="17.35" height="1" fill="#fff" fill-opacity="0.55"/>
<rect x="600.35" y="299.10" width="17.35" height="1" fill="#fff" fill-opacity="0.55"/>
<rect x="600.35" y="289.69" width="17.35" height="1" fill="#fff" fill-opacity="0.55"/>
<rect x="600.35" y="280.28" width="17.35" height="1" fill="#fff" fill-opacity="0.55"/>
<rect x="600.35" y="270.87" width="17.35" height="1" fill="#fff" fill-opacity="0.55"/>
<rect x="600.35" y="261.46" width="17.35" height="1" fill="#fff" fill-opacity="0.55"/>
<rect x="600.35" y="242.64" width="17.35" height="1" fill="#fff" fill-opacity="0.55"/>
<rect x="600.35" y="233.23" width="17.35" height="1" fill="#fff" fill-opacity="0.55"/>
<rect x="631.02" y="327.83" width="17.35" height="112.92" fill="#B08846"/>
<rect x="631.02" y="309.01" width="17.35" height="18.82" fill="#5E47B0"/>
<rect x="631.02" y="290.19" width="17.35" height="18.82" fill="#48B074"/>
<rect x="631.02" y="271.37" width="17.35" height="18.82" fill="#CDB452"/>
<rect x="631.02" y="261.96" width="17.35" height="9.41" fill="#B2475E"/>
<rect x="631.02" y="252.55" width="17.35" height="9.41" fill="#52CCCC"/>
<rect x="631.02" y="243.14" width="17.35" height="9.41" fill="#B0478A"/>
<rect x="631.02" y="233.73" width="17.35" height="9.41" fill="#CDB452"/>
<rect x="631.02" y="224.32" width="17.35" height="9.41" fill="#88B347"/>
<rect x="631.02" y="214.91" width="17.35" height="9.41" fill="#B27347"/>
<rect x="631.02" y="205.50" width="17.35" height="9.41" fill="#52CCB3"/>
<rect x="631.02" y="327.33" width="17.35" height="1" fill="#fff" fill-opacity="0.55"/>
<rect x="631.02" y="308.51" width="17.35" height="1" fill="#fff" fill-opacity="0.55"/>
<rect x="631.02" y="289.69" width="17.35" height="1" fill="#fff" fill-opacity="0.55"/>
<rect x="631.02" y="270.87" width="17.35" height="1" fill="#fff" fill-opacity="0.55"/>
<rect x="631.02" y="261.46" width="17.35" height="1" fill="#fff" fill-opacity="0.55"/>
<rect x="631.02" y="252.05" width="17.35" height="1" fill="#fff" fill-opacity="0.55"/>
<rect x="631.02" y="242.64" width="17.35" height="1" fill="#fff" fill-opacity="0.55"/>
<rect x="631.02" y="233.23" width="17.35" height="1" fill="#fff" fill-opacity="0.55"/>
<rect x="631.02" y="223.82" width="17.35" height="1" fill="#fff" fill-opacity="0.55"/>
<rect x="631.02" y="214.41" width="17.35" height="1" fill="#fff" fill-opacity="0.55"/>
<rect x="661.69" y="299.60" width="17.35" height="141.15" fill="#B08846"/>
<rect x="661.69" y="280.78" width="17.35" height="18.82" fill="#5E47B0"/>
<rect x="661.69" y="252.55" width="17.35" height="28.23" fill="#48B074"/>
<rect x="661.69" y="233.73" width="17.35" height="18.82" fill="#B2475E"/>
<rect x="661.69" y="214.91" width="17.35" height="18.82" fill="#48B09A"/>
<rect x="661.69" y="205.50" width="17.35" height="9.41" fill="#52CCCC"/>
<rect x="661.69" y="196.09" width="17.35" height="9.41" fill="#B2475E"/>
<rect x="661.69" y="186.68" width="17.35" height="9.41" fill="#B0478A"/>
<rect x="661.69" y="177.27" width="17.35" height="9.41" fill="#CDB452"/>
<rect x="661.69" y="167.86" width="17.35" height="9.41" fill="#52CCB3"/>
<rect x="661.69" y="158.45" width="17.35" height="9.41" fill="#48B088"/>
<rect x="661.69" y="299.10" width="17.35" height="1" fill="#fff" fill-opacity="0.55"/>
<rect x="661.69" y="280.28" width="17.35" height="1" fill="#fff" fill-opacity="0.55"/>
<rect x="661.69" y="252.05" width="17.35" height="1" fill="#fff" fill-opacity="0.55"/>
<rect x="661.69" y="233.23" width="17.35" height="1" fill="#fff" fill-opacity="0.55"/>
<rect x="661.69" y="214.41" width="17.35" height="1" fill="#fff" fill-opacity="0.55"/>
<rect x="661.69" y="205.00" width="17.35" height="1" fill="#fff" fill-opacity="0.55"/>
<rect x="661.69" y="195.59" width="17.35" height="1" fill="#fff" fill-opacity="0.55"/>
<rect x="661.69" y="186.18" width="17.35" height="1" fill="#fff" fill-opacity="0.55"/>
<rect x="661.69" y="176.77" width="17.35" height="1" fill="#fff" fill-opacity="0.55"/>
<rect x="661.69" y="167.36" width="17.35" height="1" fill="#fff" fill-opacity="0.55"/>
<rect x="692.36" y="337.24" width="17.35" height="103.51" fill="#B08846"/>
<rect x="692.36" y="327.83" width="17.35" height="9.41" fill="#5E47B0"/>
<rect x="692.36" y="309.01" width="17.35" height="18.82" fill="#48B074"/>
<rect x="692.36" y="299.60" width="17.35" height="9.41" fill="#CDB452"/>
<rect x="692.36" y="290.19" width="17.35" height="9.41" fill="#B2475E"/>
<rect x="692.36" y="280.78" width="17.35" height="9.41" fill="#52CCCC"/>
<rect x="692.36" y="271.37" width="17.35" height="9.41" fill="#CDB452"/>
<rect x="692.36" y="261.96" width="17.35" height="9.41" fill="#52CCB3"/>
<rect x="692.36" y="336.74" width="17.35" height="1" fill="#fff" fill-opacity="0.55"/>
<rect x="692.36" y="327.33" width="17.35" height="1" fill="#fff" fill-opacity="0.55"/>
<rect x="692.36" y="308.51" width="17.35" height="1" fill="#fff" fill-opacity="0.55"/>
<rect x="692.36" y="299.10" width="17.35" height="1" fill="#fff" fill-opacity="0.55"/>
<rect x="692.36" y="289.69" width="17.35" height="1" fill="#fff" fill-opacity="0.55"/>
<rect x="692.36" y="280.28" width="17.35" height="1" fill="#fff" fill-opacity="0.55"/>
<rect x="692.36" y="270.87" width="17.35" height="1" fill="#fff" fill-opacity="0.55"/>
<rect x="753.70" y="421.93" width="17.35" height="18.82" fill="#B08846"/>
<rect x="753.70" y="403.11" width="17.35" height="18.82" fill="#5E47B0"/>
<rect x="753.70" y="384.29" width="17.35" height="18.82" fill="#48B074"/>
<rect x="753.70" y="374.88" width="17.35" height="9.41" fill="#CDB452"/>
<rect x="753.70" y="365.47" width="17.35" height="9.41" fill="#B2475E"/>
<rect x="753.70" y="356.06" width="17.35" height="9.41" fill="#52CCCC"/>
<rect x="753.70" y="346.65" width="17.35" height="9.41" fill="#88B347"/>
<rect x="753.70" y="337.24" width="17.35" height="9.41" fill="#B27347"/>
<rect x="753.70" y="327.83" width="17.35" height="9.41" fill="#CC5268"/>
<rect x="753.70" y="318.42" width="17.35" height="9.41" fill="#52CCB3"/>
<rect x="753.70" y="421.43" width="17.35" height="1" fill="#fff" fill-opacity="0.55"/>
<rect x="753.70" y="402.61" width="17.35" height="1" fill="#fff" fill-opacity="0.55"/>
<rect x="753.70" y="383.79" width="17.35" height="1" fill="#fff" fill-opacity="0.55"/>
<rect x="753.70" y="374.38" width="17.35" height="1" fill="#fff" fill-opacity="0.55"/>
<rect x="753.70" y="364.97" width="17.35" height="1" fill="#fff" fill-opacity="0.55"/>
<rect x="753.70" y="355.56" width="17.35" height="1" fill="#fff" fill-opacity="0.55"/>
<rect x="753.70" y="346.15" width="17.35" height="1" fill="#fff" fill-opacity="0.55"/>
<rect x="753.70" y="336.74" width="17.35" height="1" fill="#fff" fill-opacity="0.55"/>
<rect x="753.70" y="327.33" width="17.35" height="1" fill="#fff" fill-opacity="0.55"/>
<rect x="784.37" y="403.11" width="17.35" height="37.64" fill="#B08846"/>
<rect x="132" y="144.5" width="2" height="295.8" fill="#cacaca"/>
<rect x="132.0" y="439.8" width="677.5" height="1.2" fill="#8c8c8c"/>
<rect x="131" y="440.10" width="2" height="1" fill="#777"/>
<text x="129.5" y="443.20" text-anchor="end" class="yt">0</text>
<rect x="131" y="421.28" width="2" height="1" fill="#777"/>
<text x="129.5" y="424.38" text-anchor="end" class="yt">2</text>
<rect x="131" y="402.46" width="2" height="1" fill="#777"/>
<text x="129.5" y="405.56" text-anchor="end" class="yt">4</text>
<rect x="131" y="383.64" width="2" height="1" fill="#777"/>
<text x="129.5" y="386.74" text-anchor="end" class="yt">6</text>
<rect x="131" y="364.82" width="2" height="1" fill="#777"/>
<text x="129.5" y="367.92" text-anchor="end" class="yt">8</text>
<rect x="131" y="346.00" width="2" height="1" fill="#777"/>
<text x="129.5" y="349.10" text-anchor="end" class="yt">10</text>
<rect x="131" y="327.18" width="2" height="1" fill="#777"/>
<text x="129.5" y="330.28" text-anchor="end" class="yt">12</text>
<rect x="131" y="308.36" width="2" height="1" fill="#777"/>
<text x="129.5" y="311.46" text-anchor="end" class="yt">14</text>
<rect x="131" y="289.54" width="2" height="1" fill="#777"/>
<text x="129.5" y="292.64" text-anchor="end" class="yt">16</text>
<rect x="131" y="270.72" width="2" height="1" fill="#777"/>
<text x="129.5" y="273.82" text-anchor="end" class="yt">18</text>
<rect x="131" y="251.90" width="2" height="1" fill="#777"/>
<text x="129.5" y="255.00" text-anchor="end" class="yt">20</text>
<rect x="131" y="233.08" width="2" height="1" fill="#777"/>
<text x="129.5" y="236.18" text-anchor="end" class="yt">22</text>
<rect x="131" y="214.26" width="2" height="1" fill="#777"/>
<text x="129.5" y="217.36" text-anchor="end" class="yt">24</text>
<rect x="131" y="195.44" width="2" height="1" fill="#777"/>
<text x="129.5" y="198.54" text-anchor="end" class="yt">26</text>
<rect x="131" y="176.62" width="2" height="1" fill="#777"/>
<text x="129.5" y="179.72" text-anchor="end" class="yt">28</text>
<rect x="131" y="157.80" width="2" height="1" fill="#777"/>
<text x="129.5" y="160.90" text-anchor="end" class="yt">30</text>
<text x="148.48" y="452.4" text-anchor="middle" class="xl">Apr 21</text>
<text x="209.82" y="452.4" text-anchor="middle" class="xl">Apr 23</text>
<text x="271.16" y="452.4" text-anchor="middle" class="xl">Apr 25</text>
<text x="332.50" y="452.4" text-anchor="middle" class="xl">Apr 27</text>
<text x="393.84" y="452.4" text-anchor="middle" class="xl">Apr 29</text>
<text x="455.18" y="452.4" text-anchor="middle" class="xl">May 1</text>
<text x="516.51" y="452.4" text-anchor="middle" class="xl">May 3</text>
<text x="577.86" y="452.4" text-anchor="middle" class="xl">May 5</text>
<text x="639.19" y="452.4" text-anchor="middle" class="xl">May 7</text>
<text x="700.54" y="452.4" text-anchor="middle" class="xl">May 9</text>
<text x="761.88" y="452.4" text-anchor="middle" class="xl">May 11</text>
<text transform="translate(112.5,292) rotate(-90)" text-anchor="middle" class="al">Seconds</text>
<rect x="818" y="145.40" width="6" height="6" fill="#B08846"/>
<text x="826.5" y="151.00" class="lg">My custom name is here</text>
<rect x="818" y="158.83" width="6" height="6" fill="#5E47B0"/>
<text x="826.5" y="164.93" class="lg">2441165506</text>
<rect x="818" y="172.26" width="6" height="6" fill="#48B074"/>
<text x="826.5" y="178.36" class="lg">5786433500</text>
<rect x="818" y="185.69" width="6" height="6" fill="#CDB452"/>
<text x="826.5" y="191.79" class="lg">3155814339</text>
<rect x="818" y="199.12" width="6" height="6" fill="#B2475E"/>
<text x="826.5" y="205.22" class="lg">3139941345</text>
<rect x="818" y="212.55" width="6" height="6" fill="#48B09A"/>
<text x="826.5" y="218.65" class="lg">3411497079</text>
<rect x="818" y="225.98" width="6" height="6" fill="#52CCCC"/>
<text x="826.5" y="232.08" class="lg">2551198972</text>
<rect x="818" y="239.41" width="6" height="6" fill="#B2475E"/>
<text x="826.5" y="245.51" class="lg">5798401915</text>
<rect x="818" y="252.84" width="6" height="6" fill="#B0478A"/>
<text x="826.5" y="258.94" class="lg">2485076424</text>
<rect x="818" y="266.27" width="6" height="6" fill="#CDB452"/>
<text x="826.5" y="272.37" class="lg">4899469577</text>
<rect x="818" y="279.70" width="6" height="6" fill="#88B347"/>
<text x="826.5" y="285.80" class="lg">2677411829</text>
<rect x="818" y="293.13" width="6" height="6" fill="#B27347"/>
<text x="826.5" y="299.23" class="lg">4642285770</text>
<rect x="818" y="306.56" width="6" height="6" fill="#CC5268"/>
<text x="826.5" y="312.66" class="lg">2327296797</text>
<rect x="818" y="319.99" width="6" height="6" fill="#52CCB3"/>
<text x="826.5" y="326.09" class="lg">5079451965</text>
<rect x="818" y="333.42" width="6" height="6" fill="#48B088"/>
<text x="826.5" y="339.52" class="lg">4088551501</text>
<rect x="136.5" y="505.2" width="672.8" height="95.90000000000003" fill="#fff" stroke="#d0d0d0" stroke-width="1"/>
<line x1="137.5" y1="510.64" x2="809.3" y2="510.64" stroke="#d0d0d0" stroke-width="1" stroke-dasharray="2,1.2"/>
<line x1="137.5" y1="555.56" x2="809.3" y2="555.56" stroke="#d0d0d0" stroke-width="1" stroke-dasharray="2,1.2"/>
<line x1="137.5" y1="578.02" x2="809.3" y2="578.02" stroke="#d0d0d0" stroke-width="1" stroke-dasharray="2,1.2"/>
<rect x="136.5" y="532.0" width="672.8" height="1.2" fill="#b4b4b4"/>
<rect x="265.58" y="526.5" width="17.4" height="53.90" fill="#36AE3C"/>
<rect x="265.58" y="532.10" width="17.4" height="1" fill="#fff" fill-opacity="0.4"/>
<rect x="265.58" y="523.1" width="17.4" height="3.40" fill="#F0AC3C" fill-opacity="1"/>
<rect x="296.10" y="529.6" width="17.4" height="44.10" fill="#36AE3C"/>
<rect x="296.10" y="532.10" width="17.4" height="1" fill="#fff" fill-opacity="0.4"/>
<rect x="326.62" y="531.2" width="17.4" height="29.70" fill="#36AE3C"/>
<rect x="326.62" y="532.10" width="17.4" height="1" fill="#fff" fill-opacity="0.4"/>
<rect x="326.62" y="531.2" width="17.4" height="1.40" fill="#fff" fill-opacity="0.4"/>
<rect x="357.14" y="527.5" width="17.4" height="31.90" fill="#36AE3C"/>
<rect x="357.14" y="532.10" width="17.4" height="1" fill="#fff" fill-opacity="0.4"/>
<rect x="357.14" y="526.5" width="17.4" height="1.00" fill="#F0AC3C" fill-opacity="0.55"/>
<rect x="387.66" y="530.4" width="17.4" height="26.60" fill="#36AE3C"/>
<rect x="387.66" y="532.10" width="17.4" height="1" fill="#fff" fill-opacity="0.4"/>
<rect x="418.18" y="529.8" width="17.4" height="22.50" fill="#36AE3C"/>
<rect x="418.18" y="532.10" width="17.4" height="1" fill="#fff" fill-opacity="0.4"/>
<rect x="448.70" y="530.6" width="17.4" height="28.80" fill="#36AE3C"/>
<rect x="448.70" y="532.10" width="17.4" height="1" fill="#fff" fill-opacity="0.4"/>
<rect x="479.22" y="526.5" width="17.4" height="34.00" fill="#36AE3C"/>
<rect x="479.22" y="532.10" width="17.4" height="1" fill="#fff" fill-opacity="0.4"/>
<rect x="479.22" y="523.9" width="17.4" height="2.60" fill="#F0AC3C" fill-opacity="1"/>
<rect x="509.74" y="532.4" width="17.4" height="34.40" fill="#36AE3C"/>
<rect x="540.26" y="530.0" width="17.4" height="24.80" fill="#36AE3C"/>
<rect x="540.26" y="532.10" width="17.4" height="1" fill="#fff" fill-opacity="0.4"/>
<rect x="570.78" y="532.4" width="17.4" height="35.80" fill="#36AE3C"/>
<rect x="601.30" y="532.0" width="17.4" height="18.90" fill="#36AE3C"/>
<rect x="601.30" y="532.0" width="17.4" height="0.60" fill="#fff" fill-opacity="0.4"/>
<rect x="631.82" y="528.0" width="17.4" height="20.50" fill="#36AE3C"/>
<rect x="631.82" y="532.10" width="17.4" height="1" fill="#fff" fill-opacity="0.4"/>
<rect x="631.82" y="526.1" width="17.4" height="1.90" fill="#F0AC3C" fill-opacity="1"/>
<rect x="631.82" y="524.9" width="17.4" height="1.20" fill="#DE2430"/>
<rect x="662.34" y="527.8" width="17.4" height="52.60" fill="#36AE3C"/>
<rect x="662.34" y="532.10" width="17.4" height="1" fill="#fff" fill-opacity="0.4"/>
<rect x="662.34" y="525.3" width="17.4" height="2.50" fill="#F0AC3C" fill-opacity="1"/>
<rect x="662.34" y="509.7" width="17.4" height="15.60" fill="#DE2430"/>
<rect x="692.86" y="527.8" width="17.4" height="68.60" fill="#36AE3C"/>
<rect x="692.86" y="532.10" width="17.4" height="1" fill="#fff" fill-opacity="0.4"/>
<rect x="692.86" y="525.3" width="17.4" height="2.50" fill="#F0AC3C" fill-opacity="1"/>
<rect x="692.86" y="513.8" width="17.4" height="11.50" fill="#DE2430"/>
<rect x="723.38" y="532.8" width="17.4" height="1.00" fill="#36AE3C"/>
<rect x="753.90" y="527.6" width="17.4" height="37.10" fill="#36AE3C"/>
<rect x="753.90" y="532.10" width="17.4" height="1" fill="#fff" fill-opacity="0.4"/>
<rect x="753.90" y="524.5" width="17.4" height="3.10" fill="#F0AC3C" fill-opacity="1"/>
<rect x="753.90" y="510.3" width="17.4" height="14.20" fill="#DE2430"/>
<rect x="784.42" y="532.5" width="17.4" height="9.00" fill="#36AE3C"/>
<rect x="136.0" y="505.2" width="1.2" height="95.90000000000003" fill="#c4c4c4"/>
<rect x="136.0" y="600.5" width="673.8" height="1.2" fill="#8c8c8c"/>
<rect x="134.5" y="509.84" width="2" height="1" fill="#c0c0c0"/>
<text x="133.5" y="512.64" text-anchor="end" class="yt">20</text>
<rect x="134.5" y="532.30" width="2" height="1" fill="#c0c0c0"/>
<text x="133.5" y="535.10" text-anchor="end" class="yt">0</text>
<rect x="134.5" y="554.76" width="2" height="1" fill="#c0c0c0"/>
<text x="133.5" y="557.56" text-anchor="end" class="yt">-20</text>
<rect x="134.5" y="577.22" width="2" height="1" fill="#c0c0c0"/>
<text x="133.5" y="580.02" text-anchor="end" class="yt">-40</text>
<rect x="134.5" y="600.20" width="2" height="1" fill="#c0c0c0"/>
<text x="133.5" y="603.00" text-anchor="end" class="yt">-60</text>
<text x="152.20" y="613.5" text-anchor="middle" class="xl">Apr 21</text>
<text x="213.24" y="613.5" text-anchor="middle" class="xl">Apr 23</text>
<text x="274.28" y="613.5" text-anchor="middle" class="xl">Apr 25</text>
<text x="335.32" y="613.5" text-anchor="middle" class="xl">Apr 27</text>
<text x="396.36" y="613.5" text-anchor="middle" class="xl">Apr 29</text>
<text x="457.40" y="613.5" text-anchor="middle" class="xl">May 1</text>
<text x="518.44" y="613.5" text-anchor="middle" class="xl">May 3</text>
<text x="579.48" y="613.5" text-anchor="middle" class="xl">May 5</text>
<text x="640.52" y="613.5" text-anchor="middle" class="xl">May 7</text>
<text x="701.56" y="613.5" text-anchor="middle" class="xl">May 9</text>
<text x="762.60" y="613.5" text-anchor="middle" class="xl">May 11</text>
<text transform="translate(112.5,553) rotate(-90)" text-anchor="middle" class="al">Seconds</text>
<rect x="817.7" y="506.50" width="6.2" height="6.2" fill="#DE2430"/>
<text x="826.5" y="512.30" class="lg2">Critical</text>
<rect x="817.7" y="520.10" width="6.2" height="6.2" fill="#F0AC3C"/>
<text x="826.5" y="525.90" class="lg2">Warning</text>
<rect x="817.7" y="533.70" width="6.2" height="6.2" fill="#36AE3C"/>
<text x="826.5" y="539.50" class="lg2">Normal Range</text>
</svg>

<div class="abs" id="scrtrack"></div>
<div class="abs" id="scrthumb"></div>
</div>
</body>
</html>
